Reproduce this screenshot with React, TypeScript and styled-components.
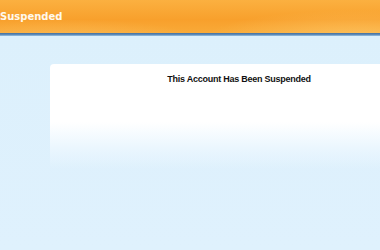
import styled, {createGlobalStyle} from 'styled-components'

const GlobalStyle = createGlobalStyle`
  html, body {
    margin: 0;
    padding: 0;
    background: #dff1fd;
    overflow: hidden;
  }
`

export default function App() {
  return (
    <Page>
      <GlobalStyle/>
      <Header>
        <Brand>Suspended</Brand>
      </Header>
      <HeaderRule/>
      <Body>
        <Card>
          <Title>This Account Has Been Suspended</Title>
        </Card>
      </Body>
    </Page>
  )
}

const Page = styled.div`
  width: 380px;
  height: 250px;
  overflow: hidden;
  background: linear-gradient(to bottom, #cbe7f6 0px, #dcf0fc 30px, #dff1fd 100%);
`

const Header = styled.div`
  height: 33px;
  display: flex;
  align-items: center;
  background:
    radial-gradient(ellipse 220px 40px at 360px 38px, rgba(255, 210, 120, 0.55), rgba(255, 210, 120, 0) 70%),
    radial-gradient(ellipse 200px 30px at 60px 40px, rgba(255, 200, 110, 0.45), rgba(255, 200, 110, 0) 70%),
    linear-gradient(to bottom, #fbb040, #f8a02c 60%, #f9aa38);
`

const Brand = styled.div`
  margin-top: -1px;
  font-family: "DejaVu Sans", "Liberation Sans", sans-serif;
  font-weight: bold;
  font-size: 10px;
  color: #fff9ee;
`

const HeaderRule = styled.div`
  height: 3px;
  background: linear-gradient(to bottom, #4b78a6 0, #4b78a6 1px, #6f9bc6 2px, #9cc3e2 3px);
`

const Body = styled.div`
  padding: 28px 0 0 50px;
`

const Card = styled.div`
  width: 378px;
  height: 105px;
  border-radius: 4px 0 0 0;
  background: linear-gradient(to bottom, #ffffff 0, #ffffff 58px, #eaf6fe 85px, rgba(223, 241, 253, 0) 105px);
  display: flex;
  justify-content: center;
`

const Title = styled.h1`
  margin: 10px 0 0;
  font-family: "Liberation Sans", Arial, sans-serif;
  font-weight: bold;
  font-size: 9px;
  letter-spacing: -0.25px;
  color: #111;
`
